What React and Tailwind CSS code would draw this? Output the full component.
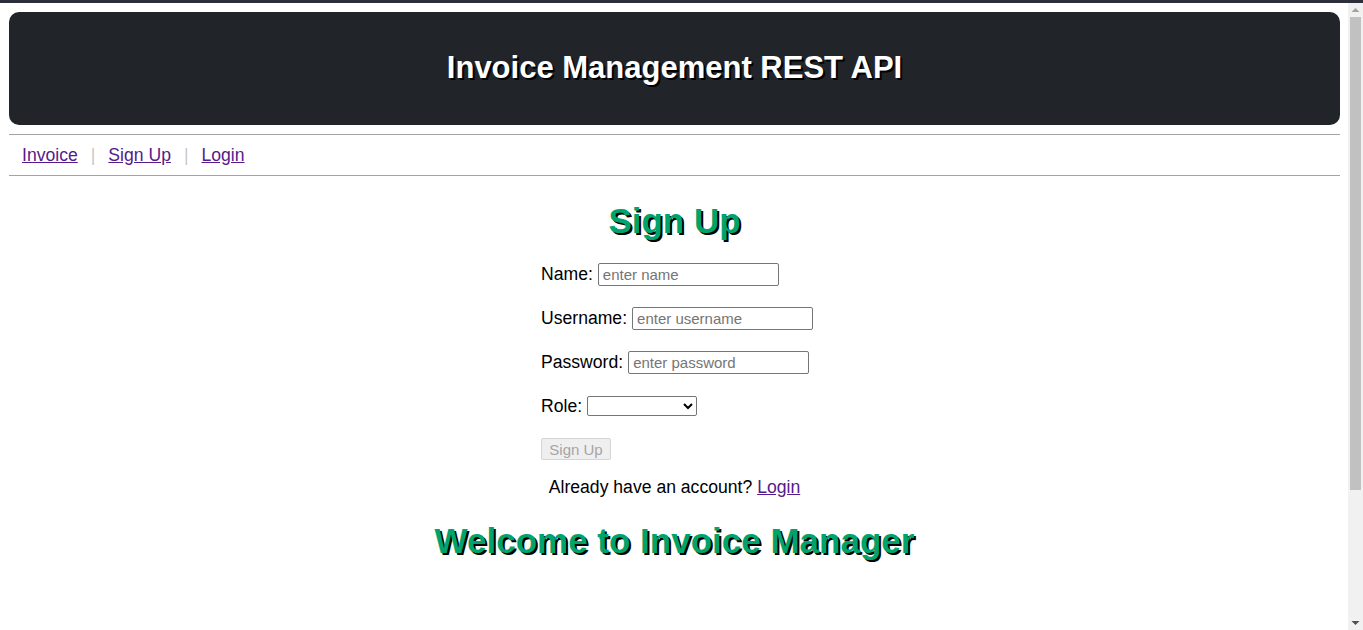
import React, { useState } from 'react';

const font = "font-['Liberation_Sans',Arial,sans-serif]";
const greenShadow = 'text-[#00a36c] [text-shadow:2px_2px_0_#000]';

const Field = ({ label, placeholder, type = 'text', width }) => (
  <div className="flex h-[44px] items-center gap-[5px] whitespace-nowrap">
    <label className="text-[17.6px] text-black">{label}</label>
    <input
      type={type}
      placeholder={placeholder}
      className={`${width} h-[23px] shrink-0 rounded-[2px] border border-[#767676] bg-white px-[4px] text-[15px] text-black outline-none placeholder:text-[#757575]`}
    />
  </div>
);

// fake window scrollbar, as seen in the screenshot
const Scrollbar = () => (
  <aside className="flex w-[15px] shrink-0 flex-col items-center bg-[#f1f1f1]">
    <svg width="15" height="14" viewBox="0 0 15 14">
      <path d="M3.5 9 L7.5 5 L11.5 9 Z" fill="#a3a3a3" />
    </svg>
    <div className="h-[473px] w-[11px] bg-[#c1c1c1]" />
    <div className="flex-1" />
    <svg width="15" height="14" viewBox="0 0 15 14">
      <path d="M3.5 5 L7.5 9 L11.5 5 Z" fill="#505050" />
    </svg>
  </aside>
);

export default function App() {
  const [role, setRole] = useState('');

  return (
    <div className={`${font} flex h-[630px] flex-col overflow-hidden bg-white`}>
      <div className="h-[3px] shrink-0 bg-[#2c2f3b]" />

      <div className="flex min-h-0 flex-1">
        <div className="min-w-0 flex-1 pl-[9px] pr-[8px]">
          {/* header */}
          <header className="mt-[9px] flex h-[113px] items-center justify-center rounded-[10px] bg-[#212529]">
            <h1 className="text-[31px] font-bold text-white [text-shadow:2px_2px_0_#000]">
              Invoice Management REST API
            </h1>
          </header>

          <hr className="mt-[9px] border-t border-[#a3a3a3]" />
          <nav className="flex h-[40px] items-center gap-[13px] pl-[13px] text-[17.6px]">
            <a href="#" className="text-[#551a8b] underline">Invoice</a>
            <span className="text-[#c8c8c8]">|</span>
            <a href="#" className="text-[#551a8b] underline">Sign Up</a>
            <span className="text-[#c8c8c8]">|</span>
            <a href="#" className="text-[#551a8b] underline">Login</a>
          </nav>
          <hr className="border-t border-[#a3a3a3]" />

          {/* sign up */}
          <main className="flex flex-col items-center">
            <h2 className={`mt-[25px] h-[40px] text-[35px] font-bold leading-[40px] ${greenShadow}`}>
              Sign Up
            </h2>

            <form className="mt-[11px] flex w-[267px] flex-col" onSubmit={(e) => e.preventDefault()}>
              <Field label="Name:" placeholder="enter name" width="w-[181px]" />
              <Field label="Username:" placeholder="enter username" width="w-[181px]" />
              <Field label="Password:" placeholder="enter password" type="password" width="w-[181px]" />
              <div className="flex h-[44px] items-center gap-[5px]">
                <label className="text-[17.6px] text-black">Role:</label>
                <select
                  value={role}
                  onChange={(e) => setRole(e.target.value)}
                  className="h-[20px] w-[110px] rounded-[2px] border border-[#767676] bg-white text-[13px] text-black"
                >
                  <option value=""></option>
                  <option value="admin">Admin</option>
                  <option value="user">User</option>
                </select>
              </div>
              <div className="flex h-[42px] items-center">
                <button
                  disabled
                  className="h-[22px] w-[70px] rounded-[2px] border border-[#d5d5d5] bg-[#efefef] text-[15px] text-[#a5a5a5]"
                >
                  Sign Up
                </button>
              </div>
            </form>

            <p className="flex h-[34px] items-center text-[17.6px] text-black">
              Already have an account?&nbsp;
              <a href="#" className="text-[#551a8b] underline">Login</a>
            </p>

            <h2 className={`mt-[17px] h-[40px] text-[35px] font-bold leading-[40px] ${greenShadow}`}>
              Welcome to Invoice Manager
            </h2>
          </main>
        </div>

        <Scrollbar />
      </div>
    </div>
  );
}
